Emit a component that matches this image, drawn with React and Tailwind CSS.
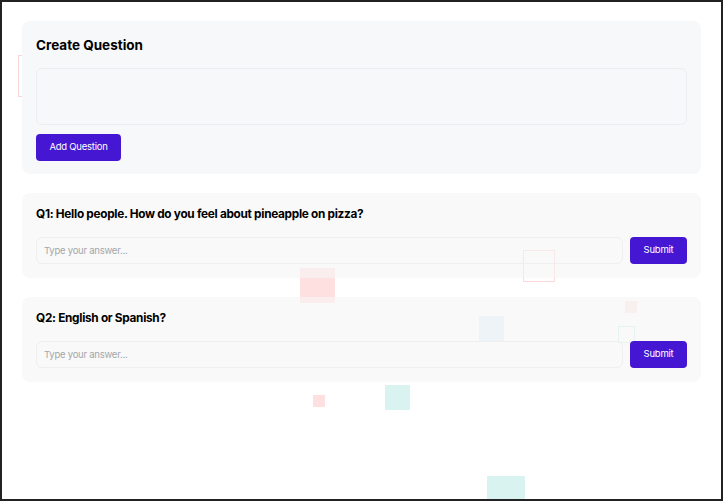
const questions = [
  { id: 1, text: "Hello people. How do you feel about pineapple on pizza?" },
  { id: 2, text: "English or Spanish?" },
];

const Decor = () => (
  <>
    <div className="absolute left-[16px] top-[53px] w-[42px] h-[42px] border border-[#fcd5d5]" />
    <div className="absolute left-[298px] top-[266px] w-[35px] h-[35px] bg-[#fee0e0]" />
    <div className="absolute left-[521px] top-[248px] w-[32px] h-[32px] border border-[#fcd8d8]" />
    <div className="absolute left-[623px] top-[299px] w-[12px] h-[12px] bg-[#fde6e6]" />
    <div className="absolute left-[477px] top-[314px] w-[25px] h-[25px] bg-[#e2f0f7]" />
    <div className="absolute left-[616px] top-[324px] w-[17px] h-[17px] border border-[#d2f0ea]" />
    <div className="absolute left-[311px] top-[393px] w-[12px] h-[12px] bg-[#fee0e0]" />
    <div className="absolute left-[383px] top-[383px] w-[25px] h-[25px] bg-[#d9f4f0]" />
    <div className="absolute left-[485px] top-[474px] w-[38px] h-[38px] bg-[#d9f4f0]" />
  </>
);

const QuestionCard = ({ q }) => (
  <div className="relative z-10 rounded-lg bg-[#f5f5f5]/60 px-3.5 pt-[13px] pb-3.5">
    <h2 className="text-[11.8px] leading-4 font-bold tracking-tight text-black">
      Q{q.id}: {q.text}
    </h2>
    <div className="mt-[15px] flex gap-[7px]">
      <input
        className="flex-1 h-[27px] rounded-md border border-[#eeeff1] bg-transparent px-[7px] text-[9.5px] tracking-tight placeholder:text-[#a3a6ab] outline-none"
        placeholder="Type your answer..."
      />
      <button className="w-[57px] h-[27px] rounded-[4px] bg-[#4517d3] text-white text-[9.5px] tracking-tight">
        Submit
      </button>
    </div>
  </div>
);

export default function App() {
  return (
    <div
      className="relative h-[501px] overflow-hidden border-2 border-[#222] bg-white"
      style={{ fontFamily: "Inter, 'Noto Sans', sans-serif" }}
    >
      <Decor />
      <div className="relative flex flex-col gap-[19px] px-5 pt-[19px]">
        <div className="relative z-10 rounded-lg bg-[#f7f8fa] px-3.5 pt-3.5 pb-[13px]">
          <h1 className="text-[13.5px] leading-5 font-bold text-black">Create Question</h1>
          <textarea className="mt-[13px] block w-full h-[57px] resize-none rounded-md border border-[#eceef1] bg-transparent outline-none" />
          <button className="mt-[9px] w-[85px] h-[27px] rounded-[4px] bg-[#4517d3] text-white text-[9.5px] tracking-tight">
            Add Question
          </button>
        </div>
        {questions.map((q) => (
          <QuestionCard key={q.id} q={q} />
        ))}
      </div>
    </div>
  );
}
